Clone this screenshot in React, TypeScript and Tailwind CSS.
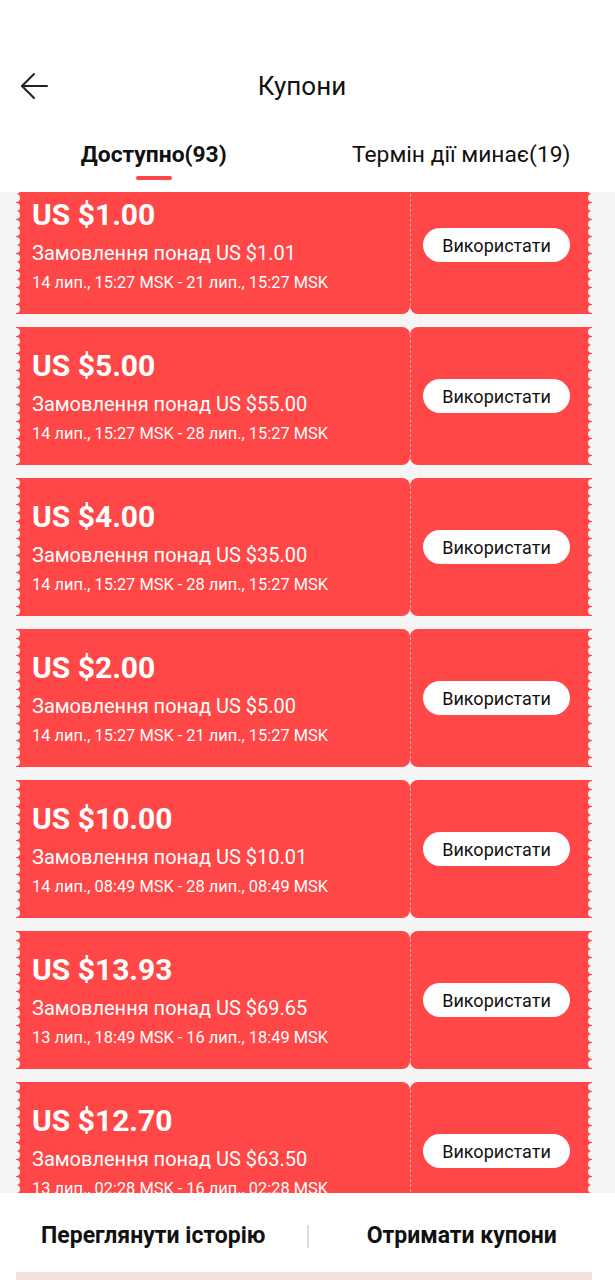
const coupons = [
  { amount: "US $1.00", min: "US $1.01", dates: "14 лип., 15:27 MSK - 21 лип., 15:27 MSK" },
  { amount: "US $5.00", min: "US $55.00", dates: "14 лип., 15:27 MSK - 28 лип., 15:27 MSK" },
  { amount: "US $4.00", min: "US $35.00", dates: "14 лип., 15:27 MSK - 28 лип., 15:27 MSK" },
  { amount: "US $2.00", min: "US $5.00", dates: "14 лип., 15:27 MSK - 21 лип., 15:27 MSK" },
  { amount: "US $10.00", min: "US $10.01", dates: "14 лип., 08:49 MSK - 28 лип., 08:49 MSK" },
  { amount: "US $13.93", min: "US $69.65", dates: "13 лип., 18:49 MSK - 16 лип., 18:49 MSK" },
  { amount: "US $12.70", min: "US $63.50", dates: "13 лип., 02:28 MSK - 16 лип., 02:28 MSK" },
];

function Scallops({ side }: { side: "left" | "right" }) {
  return (
    <div
      className={
        "absolute top-0 bottom-0 w-[8px] flex flex-col justify-around py-[1px] " +
        (side === "left" ? "left-[-4px]" : "right-[-4px]")
      }
    >
      {Array.from({ length: 16 }).map((_, i) => (
        <div key={i} className="w-[8px] h-[8px] rounded-full bg-[#f5f5f5]" />
      ))}
    </div>
  );
}

function Coupon({ amount, min, dates }: { amount: string; min: string; dates: string }) {
  return (
    <div className="flex h-[138px] shrink-0">
      {/* left part */}
      <div className="relative w-[394px] bg-[#ff4747] rounded-r-[8px] pl-4 pt-[22px] text-white">
        <Scallops side="left" />
        <p className="text-[30px] font-bold leading-[34px]">{amount}</p>
        <p className="text-[20px] leading-[26px] mt-[8px]">Замовлення понад {min}</p>
        <p className="text-[16.4px] leading-[20px] mt-[7px]">{dates}</p>
      </div>

      {/* right part */}
      <div className="relative flex-1 bg-[#ff4747] rounded-l-[8px] flex items-center">
        <div className="absolute left-0 top-[8px] bottom-[8px] border-l border-dashed border-[#ffa3a3]" />
        <Scallops side="right" />
        <button className="ml-[13px] w-[147px] h-[34px] rounded-full bg-white text-[18px] text-[#111]">
          Використати
        </button>
      </div>
    </div>
  );
}

export default function App() {
  return (
    <div className="h-[1280px] w-[615px] flex flex-col bg-white overflow-hidden font-['Roboto',sans-serif] text-[#111]">
      {/* Header */}
      <div className="pt-[54px] h-[118px] flex items-center">
        <div className="pl-5 w-[48px] flex items-center">
          <svg width="28" height="28" viewBox="0 0 28 28" fill="none" stroke="#222" strokeWidth="2" strokeLinecap="round" strokeLinejoin="round">
            <path d="M27 14H2" />
            <path d="M14 2 2 14l12 12" />
          </svg>
        </div>
        <h1 className="flex-1 text-center text-[26px] leading-[32px]">Купони</h1>
        <div className="w-[59px]" />
      </div>

      {/* Tabs */}
      <div className="h-[74px] flex">
        <div className="flex-1 flex flex-col items-center pt-[23px]">
          <span className="text-[22.8px] leading-[28px] font-bold">Доступно(93)</span>
          <div className="mt-[7px] h-[4px] w-[36px] rounded-full bg-[#ff4747]" />
        </div>
        <div className="flex-1 flex flex-col items-center pt-[23px]">
          <span className="text-[22.8px] leading-[28px]">Термін дії минає(19)</span>
        </div>
      </div>

      {/* List */}
      <div className="flex-1 bg-[#f5f5f5] overflow-hidden">
        <div className="flex flex-col gap-[13px] pl-4 pr-[23px] mt-[-16px]">
          {coupons.map((c, i) => (
            <Coupon key={i} {...c} />
          ))}
        </div>
      </div>

      {/* Bottom bar */}
      <div className="h-[79px] flex items-center pt-[7px] bg-white">
        <div className="flex-1 text-center text-[23px] font-bold">Переглянути історію</div>
        <div className="w-[2px] h-[23px] bg-[#ddd]" />
        <div className="flex-1 text-center text-[23px] font-bold">Отримати купони</div>
      </div>
      <div className="h-[8px] ml-4 mr-[23px] bg-[#f2e0e0]" />
    </div>
  );
}
